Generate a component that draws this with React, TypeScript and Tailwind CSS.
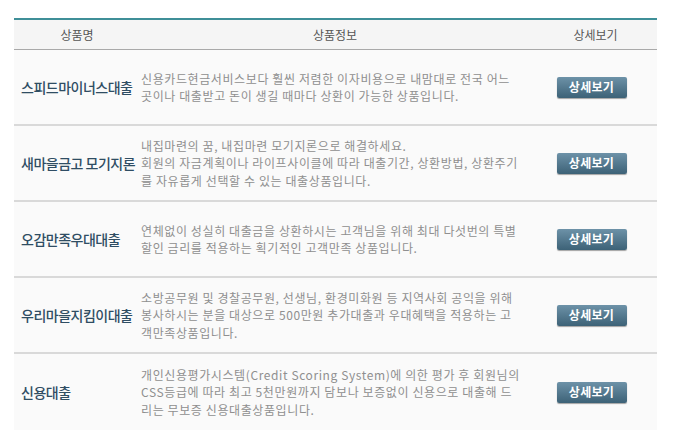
import React from "react";

type Product = {
  name: string;
  lines: string[];
};

const products: Product[] = [
  {
    name: "스피드마이너스대출",
    lines: [
      "신용카드현금서비스보다 훨씬 저렴한 이자비용으로 내맘대로 전국 어느",
      "곳이나 대출받고 돈이 생길 때마다 상환이 가능한 상품입니다.",
    ],
  },
  {
    name: "새마을금고 모기지론",
    lines: [
      "내집마련의 꿈, 내집마련 모기지론으로 해결하세요.",
      "회원의 자금계획이나 라이프사이클에 따라 대출기간, 상환방법, 상환주기",
      "를 자유롭게 선택할 수 있는 대출상품입니다.",
    ],
  },
  {
    name: "오감만족우대대출",
    lines: [
      "연체없이 성실히 대출금을 상환하시는 고객님을 위해 최대 다섯번의 특별",
      "할인 금리를 적용하는 획기적인 고객만족 상품입니다.",
    ],
  },
  {
    name: "우리마을지킴이대출",
    lines: [
      "소방공무원 및 경찰공무원, 선생님, 환경미화원 등 지역사회 공익을 위해",
      "봉사하시는 분을 대상으로 500만원 추가대출과 우대혜택을 적용하는 고",
      "객만족상품입니다.",
    ],
  },
  {
    name: "신용대출",
    lines: [
      "개인신용평가시스템(Credit Scoring System)에 의한 평가 후 회원님의",
      "CSS등급에 따라 최고 5천만원까지 담보나 보증없이 신용으로 대출해 드",
      "리는 무보증 신용대출상품입니다.",
    ],
  },
];

const DetailButton = () => (
  <button className="h-[21px] w-[70px] rounded-[2px] bg-gradient-to-b from-[#6d92a8] to-[#3d6277] text-[12px] font-bold tracking-[0.3px] text-white shadow-[0_1px_1px_rgba(0,0,0,0.35)]">
    상세보기
  </button>
);

export default function App() {
  return (
    <div
      className="min-h-[432px] bg-white pt-[18px]"
      style={{ fontFamily: '"Noto Sans CJK KR", "Noto Sans", sans-serif' }}
    >
      <div className="ml-[14px] w-[643px] border-t-2 border-[#3f8f98] bg-[#fafafa]">
        {/* header */}
        <div className="flex h-[30px] items-center border-b border-[#a9a9a9] bg-[#f5f5f5] text-[12px] text-[#555]">
          <div className="w-[126px] text-center">상품명</div>
          <div className="w-[390px] text-center">상품정보</div>
          <div className="flex-1 pl-[4px] text-center">상세보기</div>
        </div>

        {products.map((p, i) => (
          <div
            key={p.name}
            className={
              "flex h-[76px] items-center " +
              (i < products.length - 1 ? "border-b-2 border-[#d9d9d9]" : "")
            }
          >
            <div className="w-[127px] pl-[7px] text-[14px] font-medium tracking-[-0.5px] text-[#2f4d63]">
              {p.name}
            </div>
            <div className="w-[409px] text-[12px] leading-[17.5px] tracking-[0.6px] text-[#8f8f8f]">
              {p.lines.map((l) => (
                <div key={l} className="whitespace-nowrap">
                  {l}
                </div>
              ))}
            </div>
            <div className="flex flex-1 justify-center pr-[24px]">
              <DetailButton />
            </div>
          </div>
        ))}
      </div>
    </div>
  );
}
